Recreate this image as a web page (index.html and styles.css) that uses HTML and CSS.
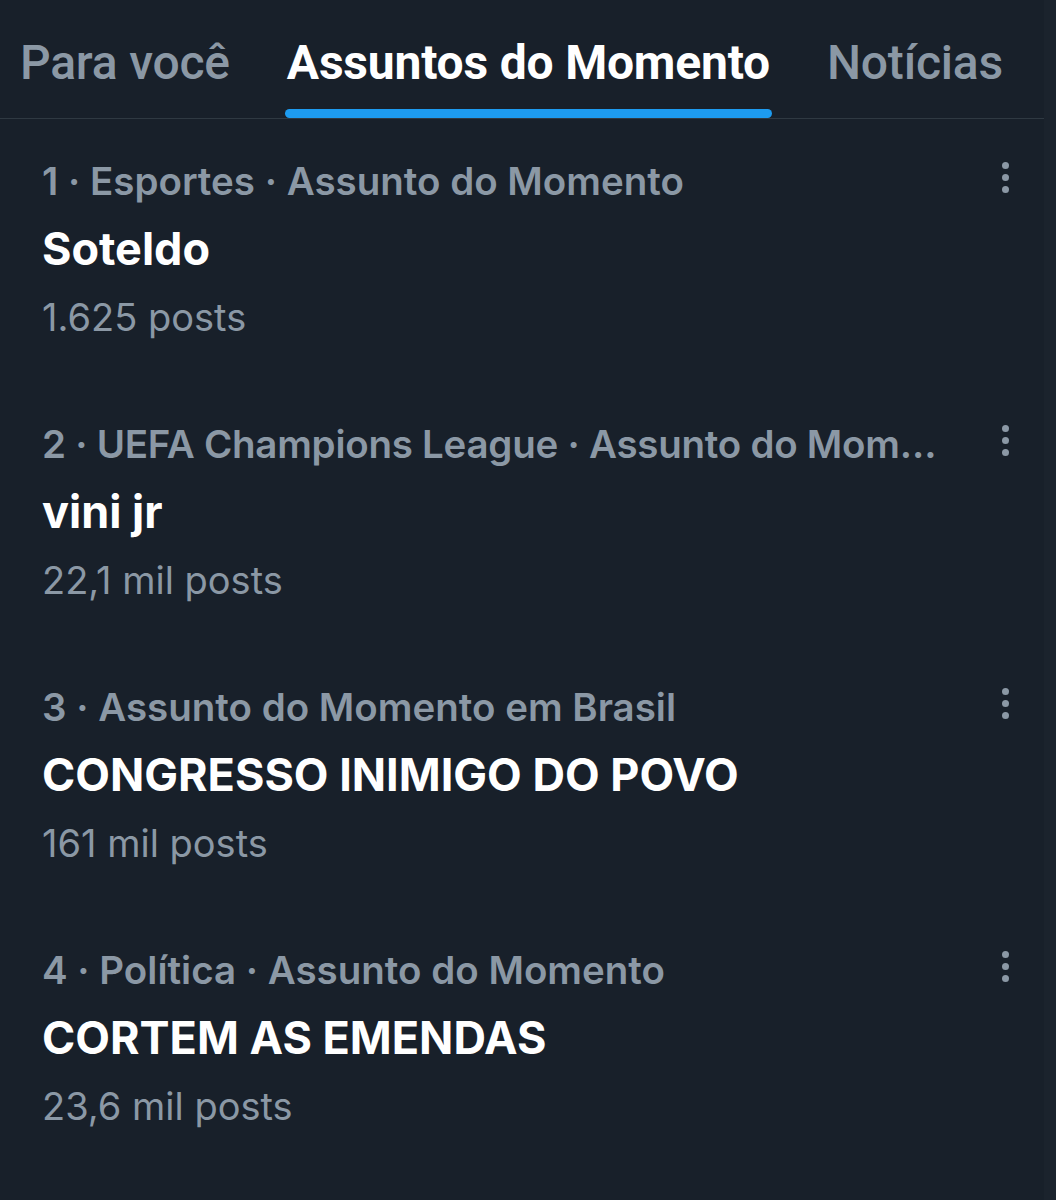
FILE: index.html
```html
<!DOCTYPE html>
<html lang="pt-BR">
<head>
<meta charset="utf-8">
<link rel="stylesheet" href="styles.css">
</head>
<body>
<div class="page">
  <main class="main">
    <nav class="tabs">
      <div class="tab">Para você</div>
      <div class="tab active">Assuntos do Momento</div>
      <div class="tab">Notícias</div>
    </nav>
    <section class="list">
      <article class="trend">
        <div class="body">
          <div class="meta">1 · Esportes · Assunto do Momento</div>
          <div class="title">Soteldo</div>
          <div class="count">1.625 posts</div>
        </div>
        <div class="more"><span></span><span></span><span></span></div>
      </article>
      <article class="trend">
        <div class="body">
          <div class="meta meta-tight">2 · UEFA Champions League · Assunto do Mom…</div>
          <div class="title">vini jr</div>
          <div class="count">22,1 mil posts</div>
        </div>
        <div class="more"><span></span><span></span><span></span></div>
      </article>
      <article class="trend">
        <div class="body">
          <div class="meta">3 · Assunto do Momento em Brasil</div>
          <div class="title">CONGRESSO INIMIGO DO POVO</div>
          <div class="count">161 mil posts</div>
        </div>
        <div class="more"><span></span><span></span><span></span></div>
      </article>
      <article class="trend">
        <div class="body">
          <div class="meta">4 · Política · Assunto do Momento</div>
          <div class="title">CORTEM AS EMENDAS</div>
          <div class="count">23,6 mil posts</div>
        </div>
        <div class="more"><span></span><span></span><span></span></div>
      </article>
    </section>
  </main>
  <div class="edge"></div>
</div>
</body>
</html>
```

FILE: styles.css
```css
html, body {
  margin: 0;
  padding: 0;
  background: #18202a;
}
.page {
  display: flex;
  width: 1056px;
  min-height: 1200px;
}
.main {
  flex: 1;
  min-width: 0;
}
.edge {
  width: 12px;
  background: #1b232d;
}
.tabs {
  display: flex;
  gap: 57px;
  padding-left: 20px;
  height: 118px;
  border-bottom: 1px solid #2f3942;
  font-family: Roboto, "Liberation Sans", sans-serif;
  font-size: 48px;
  font-weight: 500;
}
.tab {
  color: #8b98a5;
  display: flex;
  align-items: center;
  padding-top: 6px;
  position: relative;
  letter-spacing: -0.2px;
  white-space: nowrap;
}
.tab.active {
  color: #ffffff;
  font-weight: 700;
}
.tab.active::after {
  content: "";
  position: absolute;
  left: -2px;
  right: -2px;
  bottom: 0;
  height: 9px;
  border-radius: 5px;
  background: #1d9bf0;
}
.list {
  font-family: Inter, "Noto Sans", sans-serif;
}
.trend {
  display: flex;
  padding: 28px 0 31px 42px;
}
.body {
  flex: 1;
  min-width: 0;
}
.meta, .title, .count {
  height: 68px;
  line-height: 68px;
  white-space: nowrap;
  overflow: hidden;
  text-overflow: ellipsis;
}
.meta {
  color: #8b98a5;
  font-size: 38.5px;
  font-weight: 600;
}
.meta-tight {
  letter-spacing: -0.25px;
}
.title {
  color: #ffffff;
  font-size: 45px;
  font-weight: 700;
}
.count {
  color: #8b98a5;
  font-size: 38px;
  font-weight: 400;
}
.more {
  width: 44px;
  margin-left: 30px;
  margin-right: 17px;
  display: flex;
  flex-direction: column;
  align-items: center;
  gap: 5px;
  padding-top: 15px;
}
.more span {
  width: 7px;
  height: 7px;
  border-radius: 50%;
  background: #8b98a5;
}
```
